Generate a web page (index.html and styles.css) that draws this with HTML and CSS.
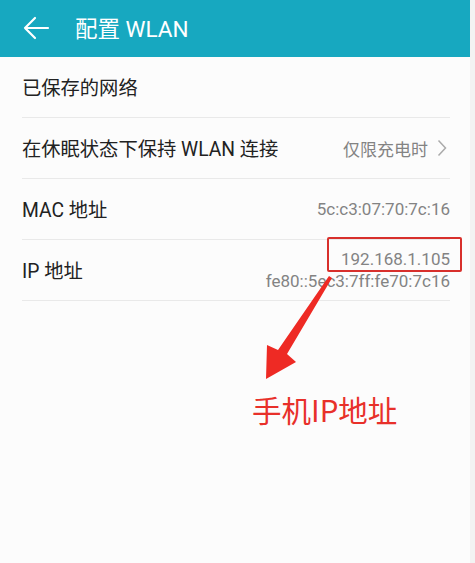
FILE: index.html
```html
<!DOCTYPE html>
<html lang="zh">
<head>
<meta charset="utf-8">
<title>配置 WLAN</title>
<link rel="stylesheet" href="styles.css">
</head>
<body>
<div class="screen">
  <header class="appbar">
    <svg class="back" width="28" height="24" viewBox="0 0 28 24"><path d="M26 12H3M13 2L3 12l10 10" fill="none" stroke="#fff" stroke-width="2.2" stroke-linecap="round" stroke-linejoin="round"/></svg>
    <h1 class="title">配置 WLAN</h1>
  </header>
  <ul class="list">
    <li class="row"><span class="label">已保存的网络</span></li>
    <li class="row"><span class="label">在休眠状态下保持 WLAN 连接</span><span class="value">仅限充电时<svg class="chev" width="10" height="18" viewBox="0 0 10 18"><path d="M1.5 1.5L8.5 9l-7 7.5" fill="none" stroke="#aaa" stroke-width="1.5"/></svg></span></li>
    <li class="row"><span class="label">MAC 地址</span><span class="value">5c:c3:07:70:7c:16</span></li>
    <li class="row ip"><span class="label">IP 地址</span><span class="values"><span class="value">192.168.1.105</span><span class="value">fe80::5ec3:7ff:fe70:7c16</span></span></li>
  </ul>
  <div class="mark-box"></div>
  <svg class="arrow" width="475" height="563" viewBox="0 0 475 563"><path d="M329 276L332 278L287 354L296 362L266 379L267 345L278 350Z" fill="#ee2a24"/></svg>
  <div class="note">手机IP地址</div>
</div>
</body>
</html>
```
FILE: styles.css
```css
* { box-sizing: border-box; }
html, body { margin: 0; padding: 0; }
body {
  width: 475px;
  height: 563px;
  background: #f3f3f3;
  font-family: Roboto, "Noto Sans CJK SC", sans-serif;
  overflow: hidden;
}
.screen {
  position: relative;
  width: 470px;
  height: 563px;
  background: #fcfcfc;
}
.appbar {
  height: 57px;
  background: #17a8c0;
  display: flex;
  align-items: center;
  padding-left: 22px;
  gap: 25px;
}
.back { display: block; margin-top: -2px; }
.title {
  margin: 0;
  font-weight: 400;
  font-size: 22.5px;
  color: #fff;
  margin-top: -3px;
}
.list {
  list-style: none;
  margin: 0 20px 0 22px;
  padding: 0;
}
.row {
  height: 61px;
  border-bottom: 1px solid #e9e9e9;
  display: flex;
  align-items: center;
  justify-content: space-between;
}
.label {
  font-size: 19.3px;
  color: #222;
}
.value {
  font-size: 17px;
  color: #838383;
  display: flex;
  align-items: center;
}
.chev { margin-left: 9px; margin-right: 3px; }
.values {
  display: flex;
  flex-direction: column;
  align-items: flex-end;
  line-height: 22px;
}
.ip .values { margin-top: -1px; }
.mark-box {
  position: absolute;
  left: 327px;
  top: 237px;
  width: 135px;
  height: 35px;
  border: 2px solid #d8302c;
  border-radius: 2px;
}
.arrow { position: absolute; left: 0; top: 0; }
.note {
  position: absolute;
  left: 252px;
  top: 391px;
  font-size: 29.5px;
  line-height: 36px;
  color: #e8302a;
  font-family: "Noto Sans CJK SC", sans-serif;
}
```
